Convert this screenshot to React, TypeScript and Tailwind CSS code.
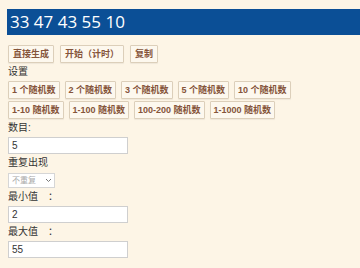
const font = { fontFamily: '"Liberation Sans", "Noto Sans CJK SC", sans-serif' };

function Btn({ label, tight }: { label: string; tight?: boolean }) {
    return (
        <button className={tight
            ? "h-[18px] px-[3px] border border-[#dccfba] bg-[#fdf8ee] text-[#85543a] text-[9px] font-bold leading-none rounded-[1px] shadow-[0_1px_1px_rgba(0,0,0,0.06)] whitespace-nowrap"
            : "h-[18px] px-[4px] border border-[#dccfba] bg-[#fdf8ee] text-[#85543a] text-[9px] font-bold leading-none rounded-[1px] shadow-[0_1px_1px_rgba(0,0,0,0.06)] whitespace-nowrap"}>
            {label}
        </button>
    );
}

function Field({ label, value }: { label: string; value: string }) {
    return (
        <>
            <div className="h-[14px] mt-[2px] text-[10px] leading-[14px] text-[#333]">{label}</div>
            <input
                readOnly
                value={value}
                className="mt-[2px] w-[120px] h-[17px] px-[3px] bg-white border border-[#cfcfcf] text-[10px] text-[#333] outline-none"
                style={font}
            />
        </>
    );
}

export default function App() {
    const countBtns = ["1 个随机数", "2 个随机数", "3 个随机数", "5 个随机数", "10 个随机数"];
    const rangeBtns = ["1-10 随机数", "1-100 随机数", "100-200 随机数", "1-1000 随机数"];

    return (
        <div className="w-[360px] h-[268px] overflow-hidden bg-[#fdf5e6] pt-[9px]" style={font}>
            <div className="ml-[7px] h-[26px] bg-[#0b4f96] text-white text-[17px] leading-[26px] pl-[3px]" style={{ fontFamily: '"Open Sans", "Noto Sans", sans-serif' }}>
                33 47 43 55 10
            </div>
            <div className="pl-[8px]">
                <div className="flex gap-[6px] mt-[10px]">
                    <Btn label="直接生成" />
                    <Btn label="开始（计时）" />
                    <Btn label="复制" />
                </div>
                <div className="h-[14px] mt-[2px] text-[10px] leading-[14px] text-[#333]">设置</div>
                <div className="flex gap-[5px] mt-[2px]">
                    {countBtns.map((b) => (
                        <Btn key={b} label={b} tight />
                    ))}
                </div>
                <div className="flex gap-[5px] mt-[2px]">
                    {rangeBtns.map((b) => (
                        <Btn key={b} label={b} tight />
                    ))}
                </div>
                <div className="flex flex-col">
                    <Field label="数目:" value="5" />
                    <div className="h-[14px] mt-[2px] text-[10px] leading-[14px] text-[#333]">重复出现</div>
                    <div className="mt-[3px] w-[47px] h-[15px] bg-white border border-[#d6d6d6] flex items-center justify-between pl-[3px] pr-[2px] text-[8px] text-[#aaa] whitespace-nowrap">
                        <span>不重复</span>
                        <svg width="7" height="5" viewBox="0 0 7 5" fill="none">
                            <path d="M1 1l2.5 2.5L6 1" stroke="#777" strokeWidth="1" />
                        </svg>
                    </div>
                    <Field label="最小值　：" value="2" />
                    <Field label="最大值　：" value="55" />
                </div>
            </div>
        </div>
    );
}
